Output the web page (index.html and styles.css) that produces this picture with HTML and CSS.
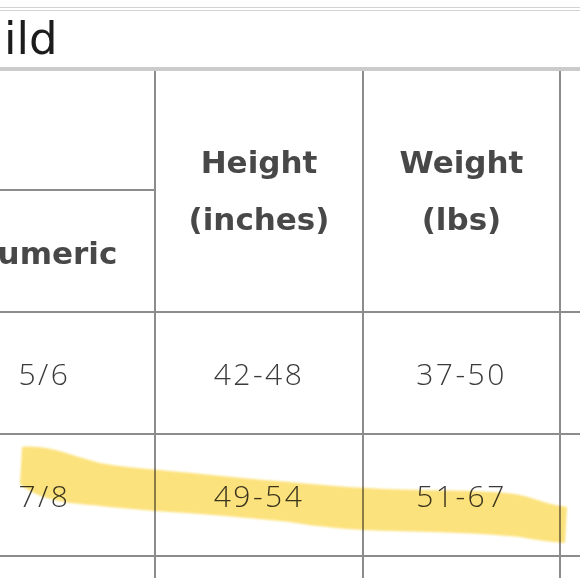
FILE: index.html
```html
<!DOCTYPE html>
<html>
<head>
<meta charset="utf-8">
<link rel="stylesheet" href="styles.css">
</head>
<body>
<div class="frame">
  <div class="sheet">
    <div class="title"><span class="lead">Ch</span>ild</div>
    <table class="chart">
      <colgroup>
        <col class="c1"><col class="c2"><col class="c3"><col class="c4">
      </colgroup>
      <tr class="head-a">
        <th class="blank"></th>
        <th rowspan="2">Height<br>(inches)</th>
        <th rowspan="2">Weight<br>(lbs)</th>
        <th rowspan="2"></th>
      </tr>
      <tr class="head-b">
        <th>Numeric</th>
      </tr>
      <tr class="row"><td>5/6</td><td>42-48</td><td>37-50</td><td></td></tr>
      <tr class="row"><td>7/8</td><td>49-54</td><td>51-67</td><td></td></tr>
      <tr class="row"><td>10/12</td><td>55-59</td><td>68-85</td><td></td></tr>
    </table>
  </div>
  <svg class="marker" width="580" height="580" viewBox="0 0 580 580">
    <defs><filter id="soft"><feGaussianBlur stdDeviation="1.2"/></filter></defs>
    <path filter="url(#soft)" d="M22 447 C 45 444, 70 455, 100 463 C 120 467, 140 468, 160 470 C 200 474, 250 479, 290 482 C 330 486, 370 489, 420 490 C 470 491, 500 491, 520 495 C 540 500, 550 505, 567 507 L 565 543 C 550 542, 535 540, 520 537 C 470 532, 420 532, 363 530 C 330 528, 300 524, 290 522 C 240 517, 190 513, 155 511 C 120 508, 90 505, 70 503 C 50 500, 30 494, 20 484 Z"/>
  </svg>
</div>
</body>
</html>
```

FILE: styles.css
```css
html, body {
  margin: 0;
  padding: 0;
  background: #fff;
}
.frame {
  position: relative;
  width: 580px;
  height: 578px;
  overflow: hidden;
  background: #fff;
}
.sheet {
  margin-left: -67px;
  padding-top: 7px;
  width: 760px;
}
.title {
  border-top: 4px double #d2d2d2;
  border-bottom: 4px solid #cbcbcb;
  height: 64px;
  box-sizing: border-box;
  padding-left: 3px;
  font-family: "DejaVu Sans", sans-serif;
  font-weight: normal;
  font-size: 45px;
  line-height: 56px;
  color: #1c1c1c;
}
.title .lead {
  letter-spacing: 4px;
}
.chart {
  border-collapse: collapse;
  table-layout: fixed;
  width: 760px;
  font-family: "DejaVu Sans", sans-serif;
  color: #474747;
}
.c1 { width: 221px; }
.c2 { width: 208px; }
.c3 { width: 197px; }
.c4 { width: 134px; }
.chart th, .chart td {
  border: 2px solid #8c8c8c;
  text-align: center;
  vertical-align: middle;
  padding: 0;
}
.chart tr:first-child th { border-top: none; }
.chart th {
  font-weight: bold;
  font-size: 31px;
  line-height: 57px;
  color: #484848;
}
.head-a { height: 119px; }
.head-b { height: 122px; }
.head-b th { padding-top: 4px; }
.row { height: 122px; }
.chart td {
  font-family: "Open Sans", "DejaVu Sans", sans-serif;
  font-weight: 300;
  font-size: 30px;
  letter-spacing: 2.5px;
  color: #3a3a3a;
}
.marker {
  position: absolute;
  left: 0;
  top: 0;
  pointer-events: none;
  mix-blend-mode: multiply;
}
.marker path {
  fill: #fce27c;
}
```
